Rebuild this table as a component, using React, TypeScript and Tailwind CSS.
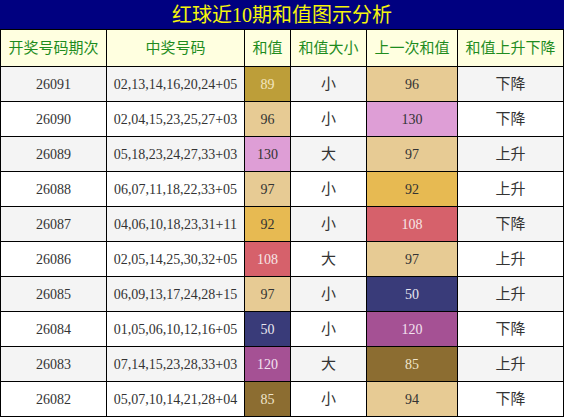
import React from 'react';

type Row = {
    issue: string;
    balls: string;
    sum: number;
    size: string;
    prev: number;
    trend: string;
};

const rows: Row[] = [
    { issue: '26091', balls: '02,13,14,16,20,24+05', sum: 89, size: '小', prev: 96, trend: '下降' },
    { issue: '26090', balls: '02,04,15,23,25,27+03', sum: 96, size: '小', prev: 130, trend: '下降' },
    { issue: '26089', balls: '05,18,23,24,27,33+03', sum: 130, size: '大', prev: 97, trend: '上升' },
    { issue: '26088', balls: '06,07,11,18,22,33+05', sum: 97, size: '小', prev: 92, trend: '上升' },
    { issue: '26087', balls: '04,06,10,18,23,31+11', sum: 92, size: '小', prev: 108, trend: '下降' },
    { issue: '26086', balls: '02,05,14,25,30,32+05', sum: 108, size: '大', prev: 97, trend: '上升' },
    { issue: '26085', balls: '06,09,13,17,24,28+15', sum: 97, size: '小', prev: 50, trend: '上升' },
    { issue: '26084', balls: '01,05,06,10,12,16+05', sum: 50, size: '小', prev: 120, trend: '下降' },
    { issue: '26083', balls: '07,14,15,23,28,33+03', sum: 120, size: '大', prev: 85, trend: '上升' },
    { issue: '26082', balls: '05,07,10,14,21,28+04', sum: 85, size: '小', prev: 94, trend: '下降' },
];

// colour per sum value (d3 category20b-ish palette)
const swatch: Record<number, string> = {
    89: 'bg-[#bd9e39] text-[#f3e6c0]',
    96: 'bg-[#e7cb94] text-[#333]',
    97: 'bg-[#e7cb94] text-[#333]',
    94: 'bg-[#e7cb94] text-[#333]',
    130: 'bg-[#de9ed6] text-[#333]',
    92: 'bg-[#e7ba52] text-[#333]',
    108: 'bg-[#d6616b] text-[#f6e6e6]',
    50: 'bg-[#393b79] text-[#e8e8f0]',
    120: 'bg-[#a55194] text-[#f3e3f0]',
    85: 'bg-[#8c6d31] text-[#f0e6cc]',
};

const headers = ['开奖号码期次', '中奖号码', '和值', '和值大小', '上一次和值', '和值上升下降'];

const font = { fontFamily: '"Liberation Serif", "Noto Sans CJK SC", serif' };

export default function App() {
    return (
        <div className="w-[564px] h-[417px] bg-black" style={font}>
            <div className="h-[29px] bg-[#000080] flex items-center justify-center text-[20px] text-[#f5f50a] leading-none">
                红球近10期和值图示分析
            </div>
            <div className="grid grid-cols-[105px_137px_45px_75px_90px_105px] gap-px p-px">
                {headers.map((h) => (
                    <div
                        key={h}
                        className="h-[36px] bg-[#ffffe0] flex items-center justify-center text-[15px] text-[#1e8c1e]"
                    >
                        {h}
                    </div>
                ))}
                {rows.map((r, i) => {
                    const bg = i % 2 === 0 ? 'bg-[#f4f4f4]' : 'bg-white';
                    const cell = 'h-[34px] flex items-center justify-center text-[14px] text-[#333]';
                    return (
                        <React.Fragment key={r.issue}>
                            <div className={`${cell} ${bg}`}>{r.issue}</div>
                            <div className={`${cell} ${bg}`}>{r.balls}</div>
                            <div className={`h-[34px] flex items-center justify-center text-[14px] ${swatch[r.sum]}`}>
                                {r.sum}
                            </div>
                            <div className={`${cell} ${bg} text-[15px] text-[#222]`}>{r.size}</div>
                            <div className={`h-[34px] flex items-center justify-center text-[14px] ${swatch[r.prev]}`}>
                                {r.prev}
                            </div>
                            <div className={`${cell} ${bg} text-[15px] text-[#222]`}>{r.trend}</div>
                        </React.Fragment>
                    );
                })}
            </div>
        </div>
    );
}
